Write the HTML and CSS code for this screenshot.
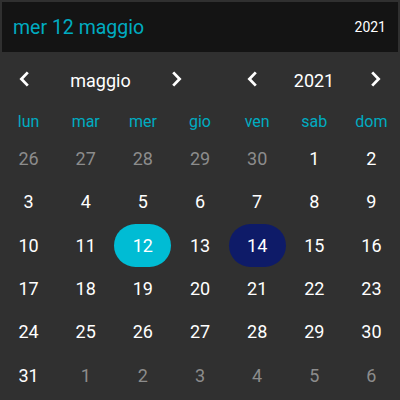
FILE: index.html
```html
<!DOCTYPE html>
<html lang="it">
<head>
<meta charset="utf-8">
<title>Calendario</title>
<link rel="stylesheet" href="styles.css">
</head>
<body>
<div class="picker">
  <header class="head">
    <span class="title">mer 12 maggio</span>
    <span class="year">2021</span>
  </header>
  <nav class="nav">
    <button class="arrow" aria-label="mese precedente"><svg width="12" height="16" viewBox="0 0 12 16"><path d="M9.8 1.4 L3.4 8 L9.8 14.6" fill="none" stroke="#fff" stroke-width="2.8"/></svg></button>
    <span class="label">maggio</span>
    <button class="arrow" aria-label="mese successivo"><svg width="12" height="16" viewBox="0 0 12 16"><path d="M2.2 1.4 L8.6 8 L2.2 14.6" fill="none" stroke="#fff" stroke-width="2.8"/></svg></button>
    <span></span>
    <button class="arrow" aria-label="anno precedente"><svg width="12" height="16" viewBox="0 0 12 16"><path d="M9.8 1.4 L3.4 8 L9.8 14.6" fill="none" stroke="#fff" stroke-width="2.8"/></svg></button>
    <span class="label">2021</span>
    <button class="arrow" aria-label="anno successivo"><svg width="12" height="16" viewBox="0 0 12 16"><path d="M2.2 1.4 L8.6 8 L2.2 14.6" fill="none" stroke="#fff" stroke-width="2.8"/></svg></button>
  </nav>
  <div class="weekdays">
    <span>lun</span><span>mar</span><span>mer</span><span>gio</span><span>ven</span><span>sab</span><span>dom</span>
  </div>
  <div class="days">
    <span class="other">26</span><span class="other">27</span><span class="other">28</span><span class="other">29</span><span class="other">30</span><span>1</span><span>2</span>
    <span>3</span><span>4</span><span>5</span><span>6</span><span>7</span><span>8</span><span>9</span>
    <span>10</span><span>11</span><span class="selected">12</span><span>13</span><span class="today">14</span><span>15</span><span>16</span>
    <span>17</span><span>18</span><span>19</span><span>20</span><span>21</span><span>22</span><span>23</span>
    <span>24</span><span>25</span><span>26</span><span>27</span><span>28</span><span>29</span><span>30</span>
    <span>31</span><span class="other">1</span><span class="other">2</span><span class="other">3</span><span class="other">4</span><span class="other">5</span><span class="other">6</span>
  </div>
</div>
</body>
</html>
```
FILE: styles.css
```css
html, body {
  margin: 0;
  padding: 0;
  background: #303030;
}
body {
  width: 400px;
  height: 400px;
  overflow: hidden;
  font-family: Roboto, "Liberation Sans", sans-serif;
  color: #fff;
}
.picker {
  display: flex;
  flex-direction: column;
}
.head {
  margin: 2px 2px 0;
  height: 50px;
  background: #141414;
  display: flex;
  align-items: center;
  justify-content: space-between;
  padding: 0 12px 0 10px;
}
.title {
  color: #00acc1;
  font-size: 19.5px;
  padding-left: 1px;
}
.year {
  font-size: 14px;
  color: #fff;
}
.nav {
  height: 54px;
  display: grid;
  grid-template-columns: 48px 105px 48px 27px 48px 76px 48px;
  align-items: center;
}
.arrow {
  border: 0;
  padding: 0;
  background: none;
  height: 48px;
  display: flex;
  align-items: center;
  justify-content: center;
}
.label {
  text-align: center;
  font-size: 18px;
  padding-top: 2px;
}
.weekdays {
  height: 31px;
  display: grid;
  grid-template-columns: repeat(7, 1fr);
  align-items: center;
  color: #00acc1;
  font-size: 16px;
  text-align: center;
}
.days {
  display: grid;
  grid-template-columns: repeat(7, 1fr);
  grid-auto-rows: 43.33px;
  font-size: 18px;
}
.days span {
  display: flex;
  align-items: center;
  justify-content: center;
  border-radius: 22px;
}
.days .other {
  color: #8c8c8c;
}
.days .selected {
  background: #00bcd4;
}
.days .today {
  background: #0e1b68;
}
```
